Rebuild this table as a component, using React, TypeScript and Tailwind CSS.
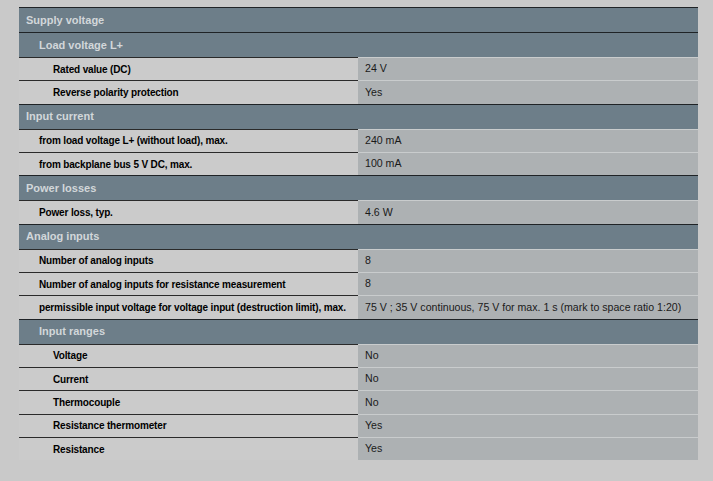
import React from "react";

type Row =
  | { kind: "h"; text: string; level: 0 | 1 }
  | { kind: "d"; label: string; value: string; level: 1 | 2 };

const rows: Row[] = [
  { kind: "h", text: "Supply voltage", level: 0 },
  { kind: "h", text: "Load voltage L+", level: 1 },
  { kind: "d", label: "Rated value (DC)", value: "24 V", level: 2 },
  { kind: "d", label: "Reverse polarity protection", value: "Yes", level: 2 },
  { kind: "h", text: "Input current", level: 0 },
  { kind: "d", label: "from load voltage L+ (without load), max.", value: "240 mA", level: 1 },
  { kind: "d", label: "from backplane bus 5 V DC, max.", value: "100 mA", level: 1 },
  { kind: "h", text: "Power losses", level: 0 },
  { kind: "d", label: "Power loss, typ.", value: "4.6 W", level: 1 },
  { kind: "h", text: "Analog inputs", level: 0 },
  { kind: "d", label: "Number of analog inputs", value: "8", level: 1 },
  { kind: "d", label: "Number of analog inputs for resistance measurement", value: "8", level: 1 },
  {
    kind: "d",
    label: "permissible input voltage for voltage input (destruction limit), max.",
    value: "75 V ; 35 V continuous, 75 V for max. 1 s (mark to space ratio 1:20)",
    level: 1,
  },
  { kind: "h", text: "Input ranges", level: 1 },
  { kind: "d", label: "Voltage", value: "No", level: 2 },
  { kind: "d", label: "Current", value: "No", level: 2 },
  { kind: "d", label: "Thermocouple", value: "No", level: 2 },
  { kind: "d", label: "Resistance thermometer", value: "Yes", level: 2 },
  { kind: "d", label: "Resistance", value: "Yes", level: 2 },
];

export default function App() {
  return (
    <div
      className="w-[713px] h-[481px] bg-[#c9c9c9] pt-[7px] pl-[19px] overflow-hidden"
      style={{ fontFamily: '"Liberation Sans", Arial, sans-serif' }}
    >
      <div className="w-[679px] flex flex-col">
        {rows.map((r, i) =>
          r.kind === "h" ? (
            <div
              key={i}
              className={
                "h-[25px] flex items-center border-t border-[#1f2326] bg-[#6d7e89] text-[11px] font-bold text-[#d2d7da] " +
                (r.level === 0 ? "pl-[7px]" : "pl-[20px]")
              }
            >
              {r.text}
            </div>
          ) : (
            <div key={i} className="h-[23.33px] grid grid-cols-[339px_1fr]">
              <div
                className={
                  "flex items-center border-t border-[#2a2a2a] bg-[#cbcbcb] text-[10px] font-bold tracking-[-0.15px] text-black " +
                  (r.level === 1 ? "pl-[20px]" : "pl-[34px]")
                }
              >
                {r.label}
              </div>
              <div className="flex items-center border-t border-[#c9cccd] bg-[#adb1b3] pl-[7px] text-[10.6px] text-[#1a1a1a] whitespace-nowrap">
                {r.value}
              </div>
            </div>
          )
        )}
      </div>
    </div>
  );
}
